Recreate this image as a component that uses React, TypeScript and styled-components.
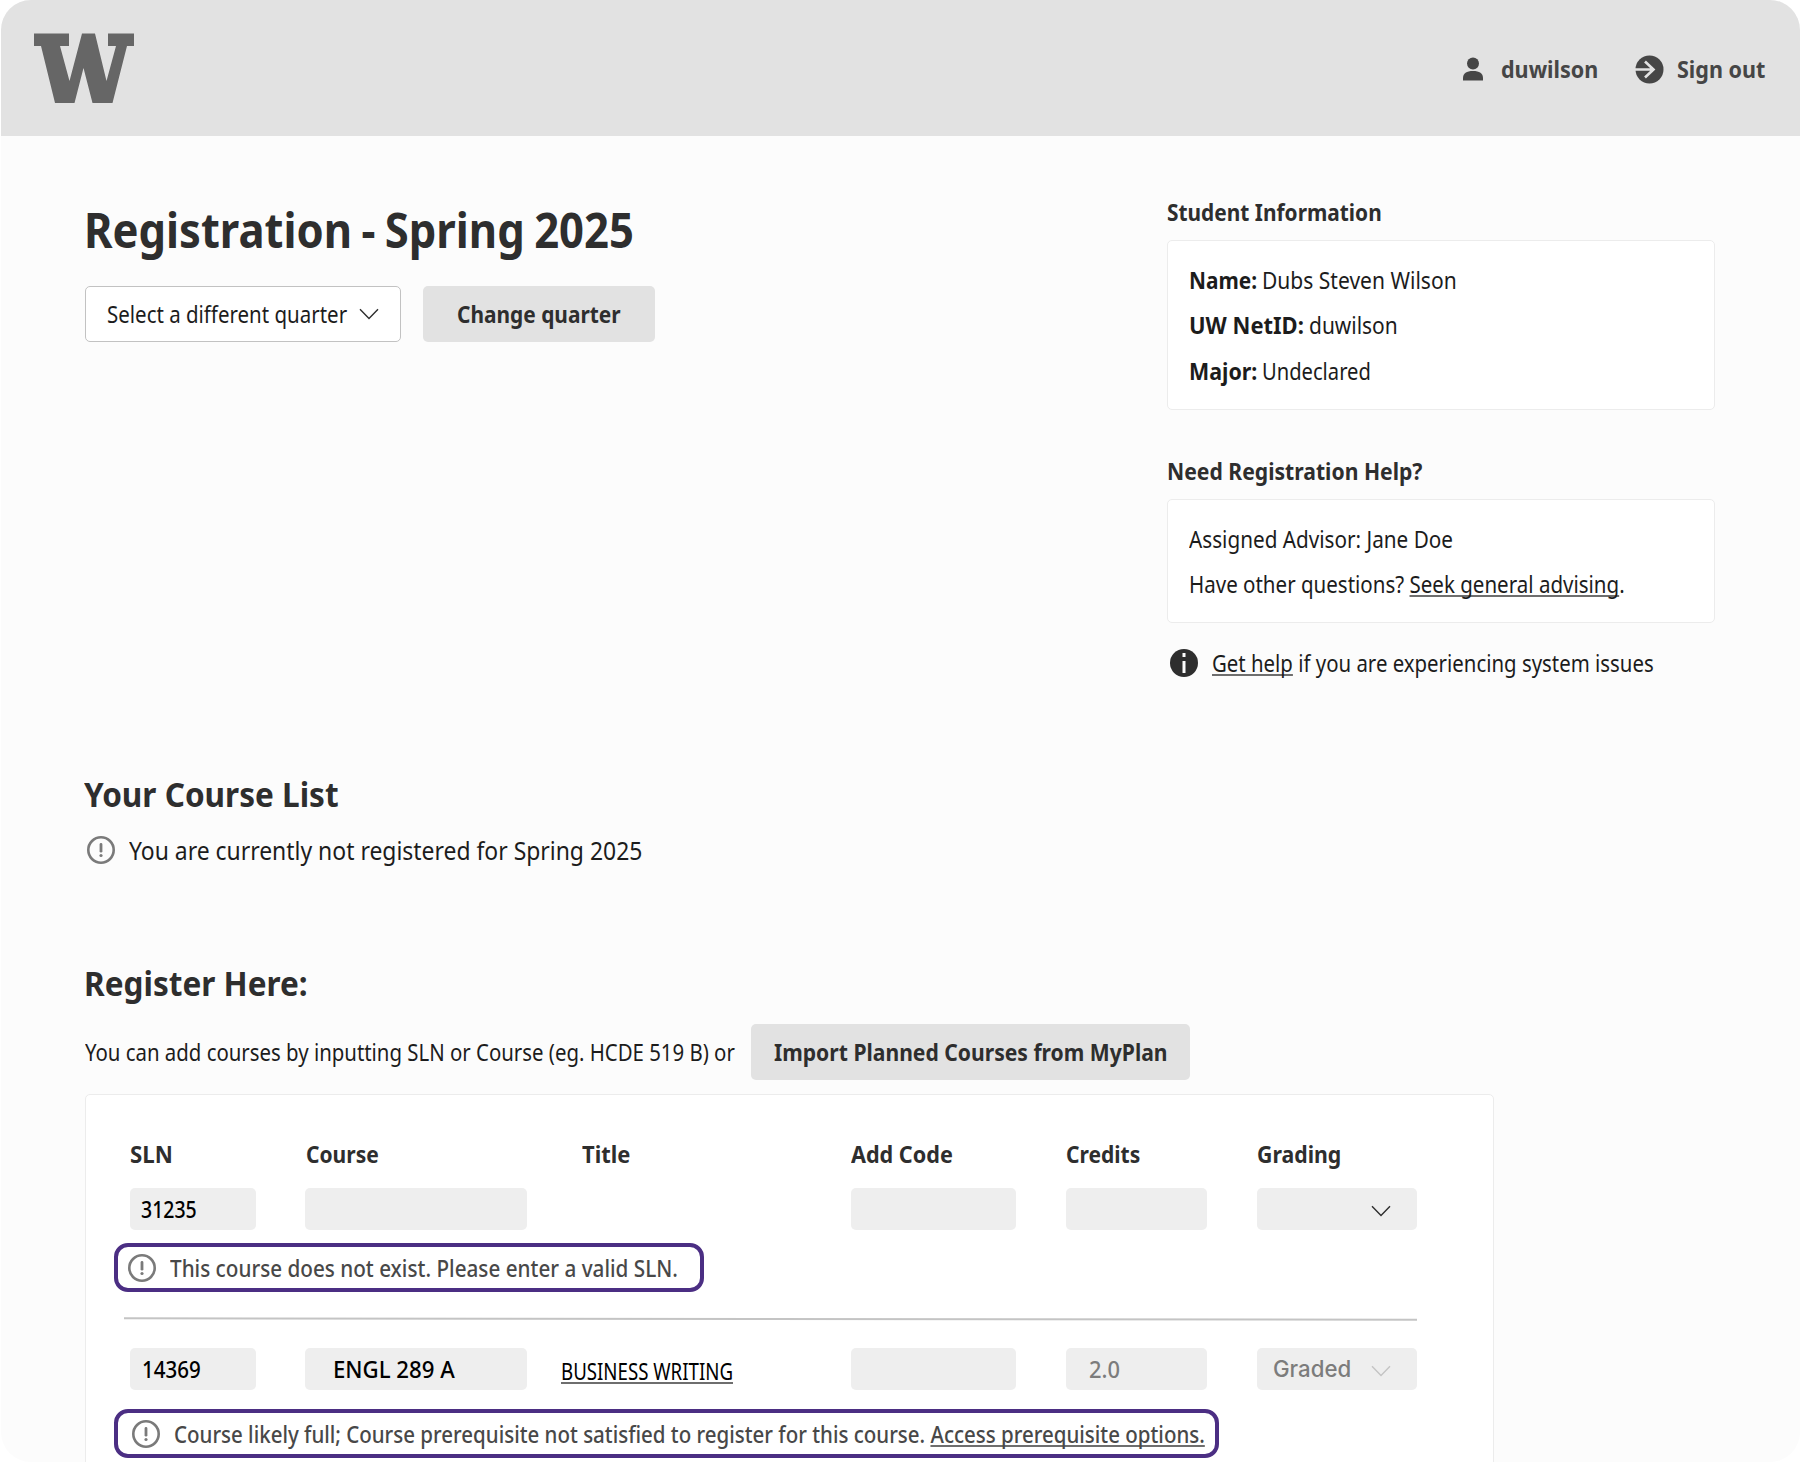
import React, { useLayoutEffect, useRef, useState } from "react";
import styled, { createGlobalStyle } from "styled-components";

const SANS = `"Noto Sans", "Open Sans", sans-serif`;

const Global = createGlobalStyle`
  *, *::before, *::after { box-sizing: border-box; }
  html, body { margin: 0; background: #ffffff; }
  body { font-family: ${SANS}; color: #1c1c1c; overflow: hidden; }
  h1, h2, h3, p { margin: 0; font-size: inherit; font-weight: inherit; }
`;

/* ---------- condensed text ---------- */

const FitBox = styled.span<{ $w: number }>`
  display: inline-block;
  flex: none;
  width: ${(p) => p.$w}px;
  white-space: nowrap;
`;

const FitInner = styled.span`
  display: inline-block;
  transform-origin: 0 50%;
`;

/* Narrows a run of text horizontally so that it fills the given width. */
function Fit({ w, children }: { w: number; children: React.ReactNode }) {
  const ref = useRef<HTMLSpanElement>(null);
  const [scale, setScale] = useState(1);
  useLayoutEffect(() => {
    if (ref.current && ref.current.offsetWidth) {
      setScale(w / ref.current.offsetWidth);
    }
  }, [w]);
  return (
    <FitBox $w={w}>
      <FitInner ref={ref} style={{ transform: `scaleX(${scale})` }}>
        {children}
      </FitInner>
    </FitBox>
  );
}

/* ---------- page shell ---------- */

const Page = styled.div`
  display: flex;
  flex-direction: column;
  width: 1799px;
  height: 1462px;
  margin: 0 1px;
  overflow: hidden;
  border-radius: 30px;
  background: #fcfcfc;
`;

const Header = styled.header`
  display: flex;
  flex: none;
  align-items: center;
  justify-content: space-between;
  height: 136px;
  padding: 0 35px 0 33px;
  background: #e2e2e2;
`;

const UserNav = styled.nav`
  display: flex;
  align-items: center;
  gap: 37px;
  padding-top: 2px;
  font-size: 24px;
  font-weight: 700;
  line-height: 34px;
  color: #464646;
`;

const NavItem = styled.div<{ $gap: number }>`
  display: flex;
  align-items: center;
  gap: ${(p) => p.$gap}px;
`;

const Main = styled.main`
  display: flex;
  flex: 1;
  flex-direction: column;
  min-height: 0;
  padding: 62px 85px 0 84px;
`;

const TopRow = styled.div`
  display: flex;
  flex: none;
  justify-content: space-between;
  height: 572px;
`;

/* ---------- quarter picker ---------- */

const PageTitle = styled.h1`
  height: 64px;
  margin-left: -1px;
  font-size: 47.5px;
  font-weight: 700;
  line-height: 64px;
  word-spacing: -2px;
  color: #2e2e2e;
`;

const QuarterRow = styled.div`
  display: flex;
  gap: 22px;
  margin-top: 24px;
`;

const QuarterSelect = styled.div`
  display: flex;
  align-items: center;
  justify-content: space-between;
  width: 316px;
  height: 56px;
  padding: 0 21px;
  border: 1px solid #c2c2c2;
  border-radius: 5px;
  background: #ffffff;
  font-size: 23.3px;
  line-height: 34px;
`;

const Button = styled.button<{ $w: number }>`
  display: flex;
  align-items: center;
  justify-content: center;
  width: ${(p) => p.$w}px;
  height: 56px;
  padding: 0;
  border: 0;
  border-radius: 5px;
  background: #e2e2e2;
  font-family: ${SANS};
  font-size: 23.3px;
  font-weight: 700;
  line-height: 34px;
  color: #2e2e2e;
`;

/* ---------- student sidebar ---------- */

const Aside = styled.aside`
  width: 548px;
  font-size: 23.3px;
`;

const AsideTitle = styled.h3`
  height: 42px;
  font-weight: 700;
  line-height: 28px;
  color: #2e2e2e;
`;

const AsideCard = styled.section<{ $h: number }>`
  height: ${(p) => p.$h}px;
  padding: 17px 21px 0;
  border: 1px solid #ececec;
  border-radius: 5px;
  background: #ffffff;
`;

const AsideSection = styled.div`
  & + & {
    margin-top: 47px;
  }
`;

const CardLine = styled.p`
  display: flex;
  gap: 5px;
  height: 45.3px;
  line-height: 45.3px;
`;

const Link = styled.a`
  text-decoration: underline;
  text-decoration-color: #6e6e6e;
  text-decoration-thickness: 1.5px;
  text-underline-offset: 1.5px;
  text-decoration-skip-ink: none;
`;

const HelpLine = styled.p`
  display: flex;
  align-items: center;
  gap: 14px;
  height: 34px;
  margin: 23px 0 0 3px;
  line-height: 34px;
`;

/* ---------- course list ---------- */

const SectionTitle = styled.h2`
  flex: none;
  height: 48px;
  margin-left: -1px;
  font-size: 34.5px;
  font-weight: 700;
  line-height: 48px;
  color: #2e2e2e;
`;

const EmptyNotice = styled.p`
  display: flex;
  flex: none;
  align-items: center;
  gap: 14px;
  height: 40px;
  margin: 12px 0 89px 2px;
  font-size: 26px;
  line-height: 40px;
`;

const ImportRow = styled.div`
  display: flex;
  flex: none;
  align-items: center;
  gap: 16px;
  height: 57px;
  margin-top: 16px;
  font-size: 23.3px;
  line-height: 34px;
`;

const Panel = styled.section`
  flex: none;
  width: 1409px;
  height: 400px;
  margin-top: 14px;
  padding: 42px 0 0 28px;
  border: 1px solid #ececec;
  border-radius: 5px;
  background: #ffffff;
  font-size: 23.3px;
`;

const CourseGrid = styled.div`
  display: grid;
  grid-template-columns: 175px 276px 270px 215px 191px 160px;
  align-items: center;
  margin-left: 16px;
`;

const HeadCell = styled.div<{ $indent?: number }>`
  height: 51px;
  padding-left: ${(p) => p.$indent ?? 0}px;
  font-weight: 700;
  line-height: 34px;
  color: #2e2e2e;
`;

const Field = styled.div<{ $w: number; $pad?: number; $muted?: boolean }>`
  display: flex;
  align-items: center;
  width: ${(p) => p.$w}px;
  height: 42px;
  padding-left: ${(p) => p.$pad ?? 12}px;
  border-radius: 5px;
  background: #eeeeee;
  font-weight: 500;
  line-height: 34px;
  color: ${(p) => (p.$muted ? "#7c7c7c" : "#000000")};
`;

const GradingField = styled(Field)`
  justify-content: space-between;
  padding: 0 26px 0 16px;
  font-family: Inter, sans-serif;
  font-size: 22.5px;
`;

const ChevronSlot = styled.span`
  display: flex;
  margin: 4px 0 0 auto;
`;

const TitleCell = styled.div`
  margin-left: -20px;
  padding-top: 3px;
  font-size: 23px;
  line-height: 34px;
  color: #000000;
`;

const Alert = styled.div<{ $w: number; $pad: number }>`
  display: flex;
  align-items: center;
  gap: 14px;
  width: ${(p) => p.$w}px;
  height: 49px;
  padding-left: ${(p) => p.$pad}px;
  border: 4px solid #4b2e83;
  border-radius: 14px;
  font-weight: 500;
  line-height: 34px;
  color: #484848;
`;

const AlertSlot = styled.div<{ $top: number }>`
  padding-top: ${(p) => p.$top}px;
`;

const Divider = styled.div`
  width: 1293px;
  height: 1.5px;
  margin: 26px 0 28.5px 10px;
  background: #c4c4c4;
  transform: rotate(0.06deg);
`;

/* ---------- icons ---------- */

function HuskyMark() {
  return (
    <svg width="100" height="70" viewBox="0 0 100 70" aria-label="UW">
      <path
        fill="#666666"
        d="M0 0.500H35V13H26L35.500 48L48 0.500H61L72.500 48L82 13H74V0.500H100V13H93L78.500 70H58.500L49.500 35L40.500 70H21L7 13H0Z"
      />
    </svg>
  );
}

function UserIcon() {
  return (
    <svg width="20" height="24" viewBox="0 0 20 24">
      <circle cx="10" cy="6.500" r="6" fill="#464646" />
      <path d="M0 23.500V21C0 16.500 3.500 14 10 14S20 16.500 20 21V23.500Z" fill="#464646" />
    </svg>
  );
}

function SignOutIcon() {
  return (
    <svg width="29" height="29" viewBox="0 0 29 29">
      <circle cx="14.500" cy="14.500" r="14" fill="#464646" />
      <path d="M0 14.500H18.500M10 6.500L18.500 14.500L10 22.500" fill="none" stroke="#e2e2e2" strokeWidth="2.600" />
    </svg>
  );
}

function InfoIcon() {
  return (
    <svg width="28" height="28" viewBox="0 0 28 28">
      <circle cx="14" cy="14" r="14" fill="#2e2e2e" />
      <rect x="12.500" y="4" width="3" height="4" fill="#fcfcfc" />
      <rect x="12.500" y="12" width="3" height="12" fill="#fcfcfc" />
    </svg>
  );
}

function AlertIcon() {
  return (
    <svg width="28" height="28" viewBox="0 0 28 28">
      <circle cx="14" cy="14" r="12.700" fill="none" stroke="#7a7a7a" strokeWidth="2.600" />
      <path d="M14 8.500V15.200" stroke="#7a7a7a" strokeWidth="2.800" strokeLinecap="round" />
      <circle cx="14" cy="19.500" r="1.600" fill="#7a7a7a" />
    </svg>
  );
}

function Chevron({ color }: { color: string }) {
  return (
    <svg width="20" height="12" viewBox="0 0 20 12">
      <path d="M1 1.300L10 10.500L19 1.300" fill="none" stroke={color} strokeWidth="1.400" />
    </svg>
  );
}

/* ---------- app ---------- */

export default function App() {
  return (
    <>
      <Global />
      <Page>
        <Header>
          <HuskyMark />
          <UserNav>
            <NavItem $gap={18}>
              <UserIcon />
              <Fit w={97}>duwilson</Fit>
            </NavItem>
            <NavItem $gap={13}>
              <SignOutIcon />
              <Fit w={88}>Sign out</Fit>
            </NavItem>
          </UserNav>
        </Header>

        <Main>
          <TopRow>
            <div>
              <PageTitle>
                <Fit w={550}>Registration - Spring 2025</Fit>
              </PageTitle>
              <QuarterRow>
                <QuarterSelect>
                  <Fit w={240}>Select a different quarter</Fit>
                  <Chevron color="#2e2e2e" />
                </QuarterSelect>
                <Button $w={232}>
                  <Fit w={164}>Change quarter</Fit>
                </Button>
              </QuarterRow>
            </div>

            <Aside>
              <AsideSection>
                <AsideTitle>
                  <Fit w={215}>Student Information</Fit>
                </AsideTitle>
                <AsideCard $h={170}>
                  <CardLine>
                    <Fit w={68}>
                      <strong>Name:</strong>
                    </Fit>
                    <Fit w={195}>Dubs Steven Wilson</Fit>
                  </CardLine>
                  <CardLine>
                    <Fit w={115}>
                      <strong>UW NetID:</strong>
                    </Fit>
                    <Fit w={89}>duwilson</Fit>
                  </CardLine>
                  <CardLine>
                    <Fit w={68}>
                      <strong>Major:</strong>
                    </Fit>
                    <Fit w={109}>Undeclared</Fit>
                  </CardLine>
                </AsideCard>
              </AsideSection>
              <AsideSection>
                <AsideTitle>
                  <Fit w={255}>Need Registration Help?</Fit>
                </AsideTitle>
                <AsideCard $h={124}>
                  <CardLine>
                    <Fit w={264}>Assigned Advisor: Jane Doe</Fit>
                  </CardLine>
                  <CardLine>
                    <Fit w={436}>
                      Have other questions? <Link>Seek general advising</Link>.
                    </Fit>
                  </CardLine>
                </AsideCard>
              </AsideSection>
              <HelpLine>
                <InfoIcon />
                <Fit w={442}>
                  <Link>Get help</Link> if you are experiencing system issues
                </Fit>
              </HelpLine>
            </Aside>
          </TopRow>

          <SectionTitle>
            <Fit w={255}>Your Course List</Fit>
          </SectionTitle>
          <EmptyNotice>
            <AlertIcon />
            <Fit w={513}>You are currently not registered for Spring 2025</Fit>
          </EmptyNotice>

          <SectionTitle>
            <Fit w={224}>Register Here:</Fit>
          </SectionTitle>
          <ImportRow>
            <Fit w={650}>You can add courses by inputting SLN or Course (eg. HCDE 519 B) or</Fit>
            <Button $w={439}>
              <Fit w={394}>Import Planned Courses from MyPlan</Fit>
            </Button>
          </ImportRow>

          <Panel>
            <CourseGrid>
              <HeadCell>
                <Fit w={43}>SLN</Fit>
              </HeadCell>
              <HeadCell $indent={1}>
                <Fit w={73}>Course</Fit>
              </HeadCell>
              <HeadCell $indent={1}>
                <Fit w={48}>Title</Fit>
              </HeadCell>
              <HeadCell>
                <Fit w={102}>Add Code</Fit>
              </HeadCell>
              <HeadCell>
                <Fit w={74}>Credits</Fit>
              </HeadCell>
              <HeadCell>
                <Fit w={84}>Grading</Fit>
              </HeadCell>

              <Field $w={126} $pad={11}>
                <Fit w={56}>31235</Fit>
              </Field>
              <Field $w={222} />
              <span />
              <Field $w={165} />
              <Field $w={141} />
              <GradingField $w={160}>
                <ChevronSlot>
                  <Chevron color="#2e2e2e" />
                </ChevronSlot>
              </GradingField>
            </CourseGrid>
            <AlertSlot $top={13}>
              <Alert $w={590} $pad={10}>
                <AlertIcon />
                <Fit w={508}>This course does not exist. Please enter a valid SLN.</Fit>
              </Alert>
            </AlertSlot>

            <Divider />

            <CourseGrid>
              <Field $w={126} $pad={12}>
                <Fit w={59}>14369</Fit>
              </Field>
              <Field $w={222} $pad={28}>
                <Fit w={122}>ENGL 289 A</Fit>
              </Field>
              <TitleCell>
                <Fit w={172}>
                  <Link>BUSINESS WRITING</Link>
                </Fit>
              </TitleCell>
              <Field $w={165} />
              <Field $w={141} $pad={23} $muted>
                <Fit w={31}>2.0</Fit>
              </Field>
              <GradingField $w={160} $muted>
                <Fit w={78}>Graded</Fit>
                <ChevronSlot>
                  <Chevron color="#c4c4c4" />
                </ChevronSlot>
              </GradingField>
            </CourseGrid>
            <AlertSlot $top={19}>
              <Alert $w={1105} $pad={14}>
                <AlertIcon />
                <Fit w={1031}>
                  Course likely full; Course prerequisite not satisfied to register for this course.{" "}
                  <Link>Access prerequisite options.</Link>
                </Fit>
              </Alert>
            </AlertSlot>
          </Panel>
        </Main>
      </Page>
    </>
  );
}
